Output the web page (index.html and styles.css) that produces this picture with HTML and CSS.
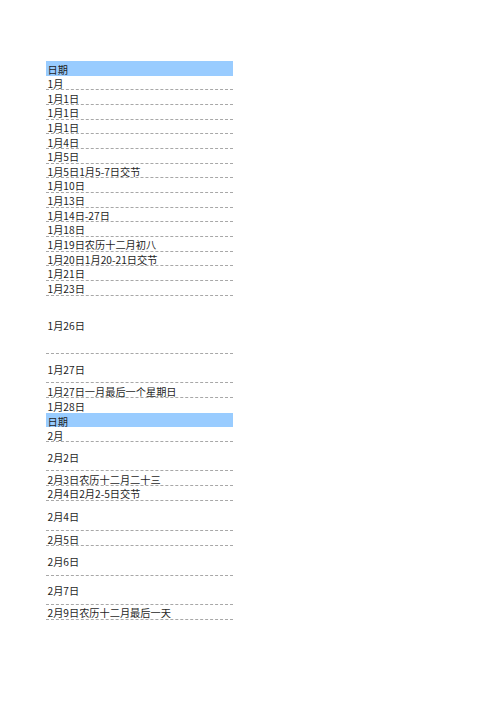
FILE: index.html
```html
<!DOCTYPE html>
<html lang="zh-CN">
<head>
<meta charset="utf-8">
<title>日期</title>
<link rel="stylesheet" href="styles.css">
</head>
<body>
<div class="sheet">
  <div class="row head">日期</div>
  <div class="row plain">1月</div>
  <div class="row">1月1日</div>
  <div class="row">1月1日</div>
  <div class="row">1月1日</div>
  <div class="row">1月4日</div>
  <div class="row">1月5日</div>
  <div class="row">1月5日1月5-7日交节</div>
  <div class="row">1月10日</div>
  <div class="row">1月13日</div>
  <div class="row">1月14日-27日</div>
  <div class="row">1月18日</div>
  <div class="row">1月19日农历十二月初八</div>
  <div class="row">1月20日1月20-21日交节</div>
  <div class="row">1月21日</div>
  <div class="row">1月23日</div>
  <div class="row h4">1月26日</div>
  <div class="row h2">1月27日</div>
  <div class="row">1月27日一月最后一个星期日</div>
  <div class="row last">1月28日</div>
  <div class="row head">日期</div>
  <div class="row">2月</div>
  <div class="row h2">2月2日</div>
  <div class="row">2月3日农历十二月二十三</div>
  <div class="row">2月4日2月2-5日交节</div>
  <div class="row r-a">2月4日</div>
  <div class="row r-b">2月5日</div>
  <div class="row r-c">2月6日</div>
  <div class="row r-d">2月7日</div>
  <div class="row r-b">2月9日农历十二月最后一天</div>
</div>
</body>
</html>
```
FILE: styles.css
```css
html, body {
  margin: 0;
  padding: 0;
  background: #ffffff;
}

.sheet {
  margin: 61px 0 0 46px;
  width: 187px;
  font-family: "Noto Sans CJK SC", "Microsoft YaHei", sans-serif;
  font-size: 10.2px;
  color: #1e1e1e;
}

.row {
  box-sizing: border-box;
  height: 14.67px;
  display: flex;
  align-items: center;
  padding-left: 1.5px;
  padding-top: 3px;
  white-space: nowrap;
  border-bottom: 1px dashed #a8a8a8;
  line-height: 1;
}

.row.head {
  background: #99ccff;
  border-bottom: none;
}

.row.last {
  border-bottom: none;
}

.row.h2 { height: 29.33px; }
.row.h4 { height: 58.67px; }
.row.r-a { height: 30.5px; }
.row.r-b { height: 15px; }
.row.r-c { height: 29.5px; }
.row.r-d { height: 29px; }
```
